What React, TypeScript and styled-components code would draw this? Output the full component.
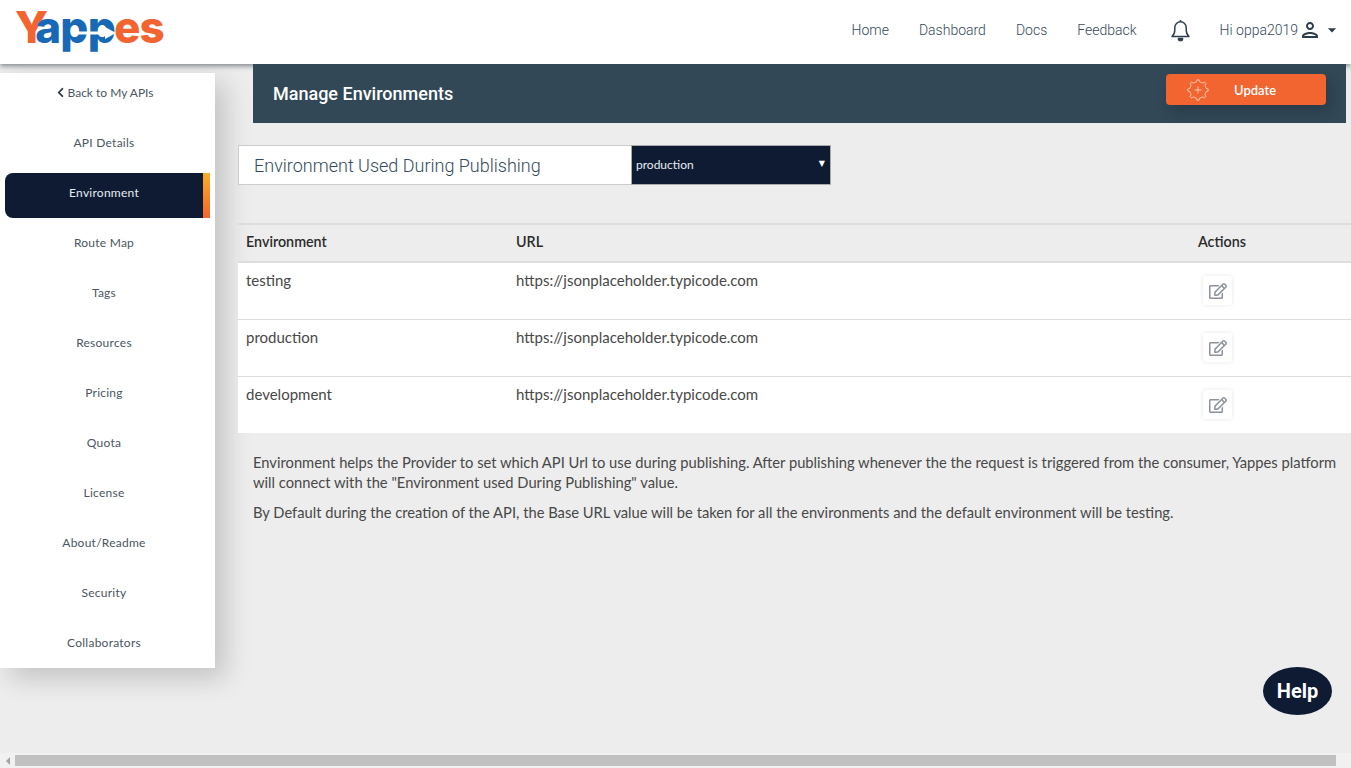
import * as React from "react";
import styled, { createGlobalStyle } from "styled-components";
import { FaChevronLeft, FaRegEdit } from "react-icons/fa";
import { MdOutlinePerson, MdArrowDropDown } from "react-icons/md";

const raleway = `"Lato", "Open Sans", sans-serif`;
const roboto = `"Roboto", "Liberation Sans", sans-serif`;

const GlobalStyle = createGlobalStyle`
  html, body {
    margin: 0;
    height: 100%;
    overflow: hidden;
    background: #ededed;
  }
  * { box-sizing: border-box; }
`;

const Page = styled.div`
  position: relative;
  width: 1351px;
  height: 768px;
  display: flex;
  flex-direction: column;
  overflow: hidden;
  font-family: ${raleway};
`;

const TopBar = styled.header`
  position: relative;
  z-index: 1;
  flex: 0 0 64px;
  display: flex;
  align-items: center;
  padding: 0 9px 4px 15px;
  background: #fff;
  box-shadow: 0 2px 5px rgba(40, 50, 60, 0.55);
`;

const LogoSvg = styled.svg`
  display: block;
  align-self: flex-start;
`;

const Nav = styled.nav`
  margin-left: auto;
  display: flex;
  align-items: center;
  gap: 30px;
`;

const NavLink = styled.a`
  font-family: ${roboto};
  font-size: 14px;
  font-weight: 300;
  color: #34495a;
`;

const Bell = styled.span`
  display: flex;
  margin-left: 3px;
  margin-right: 29px;
  color: #2c3e4c;
`;

const UserMenu = styled.div`
  display: flex;
  align-items: center;
  font-family: ${roboto};
  font-size: 14px;
  font-weight: 300;
  color: #34495a;
`;

const Body = styled.div`
  flex: 1;
  min-height: 0;
  display: flex;
  align-items: flex-start;
`;

const Sidebar = styled.aside`
  flex: 0 0 215px;
  margin-top: 9px;
  display: flex;
  flex-direction: column;
  gap: 5px;
  padding-right: 5px;
  background: #fff;
  box-shadow: 10px 10px 25px rgba(0, 0, 0, 0.18);
`;

const SideItem = styled.a<{ $active?: boolean }>`
  position: relative;
  height: 45px;
  margin-left: ${(p) => (p.$active ? "5px" : "0")};
  padding: 13px ${(p) => (p.$active ? "7px" : "2px")} 0 0;
  display: flex;
  justify-content: center;
  align-items: flex-start;
  gap: 2px;
  font-size: 12px;
  line-height: 13px;
  letter-spacing: 0.25px;
  color: ${(p) => (p.$active ? "#e8edf2" : "#4a5662")};
  background: ${(p) => (p.$active ? "#0e1b33" : "transparent")};
  border-radius: ${(p) => (p.$active ? "8px 0 0 8px" : "0")};
  ${(p) =>
    p.$active &&
    `&::after {
      content: "";
      position: absolute;
      top: 0;
      right: 0;
      bottom: 0;
      width: 7px;
      background: linear-gradient(#fbae26, #f26430);
    }`}
`;

const BackItem = styled(SideItem)`
  letter-spacing: 0;
`;

const BackArrow = styled(FaChevronLeft)`
  color: #2a3440;
  margin-top: 1px;
`;

const Main = styled.main`
  flex: 1;
  min-width: 0;
  padding-left: 23px;
`;

const Banner = styled.div`
  height: 59px;
  margin: 0 5px 0 15px;
  padding: 10px 20px 0 20px;
  display: flex;
  justify-content: space-between;
  align-items: flex-start;
  background: #324857;
  position: relative;
  z-index: 2;
`;

const BannerTitle = styled.h1`
  margin: 9px 0 0;
  font-family: ${roboto};
  font-size: 18px;
  font-weight: 500;
  line-height: 22px;
  color: #fff;
`;

const UpdateButton = styled.button`
  width: 160px;
  height: 31px;
  padding: 0 0 0 21px;
  display: flex;
  align-items: center;
  gap: 25px;
  border: 0;
  border-radius: 4px;
  background: #f26430;
  box-shadow: 4px 6px 14px rgba(0, 0, 0, 0.2);
  font-family: ${raleway};
  font-size: 13px;
  font-weight: 600;
  color: #fff;
`;

const PublishRow = styled.div`
  margin-top: 22px;
  display: flex;
  height: 40px;
`;

const PublishLabel = styled.div`
  width: 393px;
  padding-left: 15px;
  display: flex;
  align-items: center;
  background: #fff;
  border: 1px solid #ccc;
  border-right: 0;
  font-family: ${roboto};
  font-size: 18px;
  font-weight: 300;
  color: #34495a;
`;

const SelectWrap = styled.div`
  position: relative;
  width: 200px;
  height: 40px;
  &::after {
    content: "▼";
    position: absolute;
    top: 13px;
    right: 6px;
    font-family: "DejaVu Sans", sans-serif;
    font-size: 8px;
    line-height: 12px;
    color: #fff;
    pointer-events: none;
  }
`;

const EnvSelect = styled.select`
  appearance: none;
  display: block;
  width: 100%;
  height: 100%;
  padding: 0 0 2px 4px;
  border: 1px solid #aaa;
  border-radius: 0;
  background: #0e1b33;
  color: #e8edf2;
  font-family: ${raleway};
  font-size: 12px;
`;

const Table = styled.div`
  margin-top: 38px;
  border-top: 2px solid #ddd;
`;

const Row = styled.div<{ $head?: boolean }>`
  display: grid;
  grid-template-columns: 270px 682px 1fr;
  padding-left: 8px;
  height: ${(p) => (p.$head ? "38px" : "57px")};
  padding-top: ${(p) => (p.$head ? "8px" : "9px")};
  background: ${(p) => (p.$head ? "transparent" : "#fff")};
  border-bottom: ${(p) => (p.$head ? "2px solid #ddd" : "1px solid #ddd")};
  font-size: ${(p) => (p.$head ? "14.3px" : "15px")};
  line-height: 17px;
  font-weight: ${(p) => (p.$head ? 600 : 400)};
  color: ${(p) => (p.$head ? "#2b2b2b" : "#484848")};
  &:last-child {
    border-bottom: 0;
    height: 56px;
  }
`;

const EditButton = styled.button`
  width: 29px;
  height: 29px;
  margin: 4px 0 0 5px;
  padding: 0;
  display: flex;
  align-items: center;
  justify-content: center;
  border: 0;
  border-radius: 3px;
  background: #fff;
  box-shadow: 0 0 4px rgba(0, 0, 0, 0.1);
  color: #8c939b;
`;

const Notes = styled.div`
  padding: 19px 10px 0 15px;
  font-size: 14.72px;
  line-height: 20px;
  color: #484848;
`;

const Note = styled.p`
  margin: 0 0 10px;
`;

const HelpBubble = styled.div`
  position: absolute;
  left: 1263px;
  top: 667px;
  width: 69px;
  height: 48px;
  display: flex;
  align-items: center;
  justify-content: center;
  border-radius: 50%;
  background: #0e1b33;
  font-family: ${roboto};
  font-size: 20px;
  font-weight: 700;
  color: #fff;
`;

const ScrollTrack = styled.div`
  flex: 0 0 15px;
  display: flex;
  align-items: center;
  padding-right: 15px;
  background: #f1f1f1;
`;

const ScrollArrow = styled.span`
  flex: 0 0 15px;
  display: flex;
  justify-content: center;
  &::before {
    content: "";
    border-style: solid;
    border-width: 4px 4px 4px 0;
    border-color: transparent #a3a3a3 transparent transparent;
  }
`;

const ScrollThumb = styled.div`
  flex: 1;
  height: 11px;
  background: #c1c1c1;
`;

const navLinks = ["Home", "Dashboard", "Docs", "Feedback"];
const sideItems = [
  "API Details",
  "Environment",
  "Route Map",
  "Tags",
  "Resources",
  "Pricing",
  "Quota",
  "License",
  "About/Readme",
  "Security",
  "Collaborators",
];
const environments = ["testing", "production", "development"];

// gear outline with small rounded teeth, centred on 11,11
const gearPath = (() => {
  const teeth = 8;
  let d = "";
  for (let i = 0; i < teeth; i++) {
    const step = (Math.PI * 2) / teeth;
    const a = i * step;
    const pts = [
      [8.2, a - step * 0.5],
      [8.4, a - step * 0.22],
      [10.2, a - step * 0.14],
      [10.2, a + step * 0.14],
      [8.4, a + step * 0.22],
    ];
    pts.forEach(([r, t], j) => {
      const x = (11 + r * Math.cos(t)).toFixed(2);
      const y = (11 + r * Math.sin(t)).toFixed(2);
      d += `${i === 0 && j === 0 ? "M" : "L"}${x} ${y} `;
    });
  }
  return d + "Z";
})();

const Logo = () => (
  <LogoSvg width="152" height="60" viewBox="0 0 152 60">
    <text
      x="0"
      y="43"
      fontFamily="Inter, Lato, sans-serif"
      fontWeight="800"
      fontSize="44"
      letterSpacing="-0.8"
    >
      <tspan fill="#f26430">Y</tspan>
      <tspan fill="#1769b5" dx="-7">app</tspan>
      <tspan fill="#f26430" dx="-1">es</tspan>
    </text>
    <path d="M58 33h36" fill="none" stroke="#fff" strokeWidth="3" />
    <path d="M90 27l11 6-11 6z" fill="#fff" />
  </LogoSvg>
);

const GearPlus = () => (
  <svg width="22" height="22" viewBox="0 0 22 22" fill="none" stroke="#ffdfcf" strokeWidth="0.8" strokeLinejoin="round">
    <path d={gearPath} />
    <path d="M11 7.5v7M7.5 11h7" />
  </svg>
);

const BellIcon = () => (
  <svg width="21" height="24" viewBox="0 0 21 24" fill="none" stroke="currentColor" strokeWidth="1.5" strokeLinejoin="round">
    <path d="M2 18.5c1.6-1.4 2.8-3.2 2.8-6.5V9.5a5.7 5.7 0 0 1 11.4 0V12c0 3.3 1.2 5.1 2.8 6.5z" />
    <path d="M10.5 3.8V2" />
    <path d="M8.4 20.5a2.1 2.1 0 0 0 4.2 0z" fill="currentColor" />
  </svg>
);

const App: React.FunctionComponent = () => {
  return (
    <Page>
      <GlobalStyle />
      <TopBar>
        <Logo />
        <Nav>
          {navLinks.map((link) => (
            <NavLink key={link}>{link}</NavLink>
          ))}
          <Bell>
            <BellIcon />
          </Bell>
        </Nav>
        <UserMenu>
          Hi oppa2019
          <MdOutlinePerson size={24} color="#2c3e4c" />
          <MdArrowDropDown size={20} color="#2c3e4c" />
        </UserMenu>
      </TopBar>
      <Body>
        <Sidebar>
          <BackItem>
            <BackArrow size={11} />
            Back to My APIs
          </BackItem>
          {sideItems.map((item) => (
            <SideItem key={item} $active={item === "Environment"}>
              {item}
            </SideItem>
          ))}
        </Sidebar>
        <Main>
          <Banner>
            <BannerTitle>Manage Environments</BannerTitle>
            <UpdateButton>
              <GearPlus />
              Update
            </UpdateButton>
          </Banner>
          <PublishRow>
            <PublishLabel>Environment Used During Publishing</PublishLabel>
            <SelectWrap>
              <EnvSelect defaultValue="production">
                {environments.map((env) => (
                  <option key={env}>{env}</option>
                ))}
              </EnvSelect>
            </SelectWrap>
          </PublishRow>
          <Table>
            <Row $head>
              <div>Environment</div>
              <div>URL</div>
              <div>Actions</div>
            </Row>
            {environments.map((env) => (
              <Row key={env}>
                <div>{env}</div>
                <div>https://jsonplaceholder.typicode.com</div>
                <div>
                  <EditButton>
                    <FaRegEdit size={18} />
                  </EditButton>
                </div>
              </Row>
            ))}
          </Table>
          <Notes>
            <Note>
              Environment helps the Provider to set which API Url to use during publishing. After publishing whenever the the request is triggered from the consumer, Yappes platform will connect with the "Environment used During Publishing" value.
            </Note>
            <Note>
              By Default during the creation of the API, the Base URL value will be taken for all the environments and the default environment will be testing.
            </Note>
          </Notes>
        </Main>
      </Body>
      <ScrollTrack>
        <ScrollArrow />
        <ScrollThumb />
      </ScrollTrack>
      <HelpBubble>Help</HelpBubble>
    </Page>
  );
};

export default App;
